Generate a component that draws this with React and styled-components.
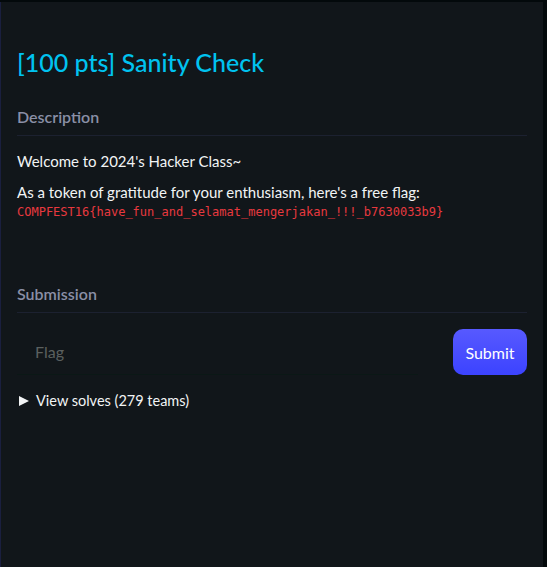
import styled, { createGlobalStyle } from "styled-components";

const Global = createGlobalStyle`
  body {
    margin: 0;
    background: #03090b;
    font-family: "Lato", "Noto Sans", sans-serif;
  }
`;

export default function App() {
  return (
    <>
      <Global />
      <Panel>
        <Title>[100 pts] Sanity Check</Title>
        <Section>
          <Heading>Description</Heading>
          <Text>Welcome to 2024's Hacker Class~</Text>
          <Text>
            As a token of gratitude for your enthusiasm, here's a free flag:
            <Flag>COMPFEST16{"{"}have_fun_and_selamat_mengerjakan_!!!_b7630033b9{"}"}</Flag>
          </Text>
        </Section>
        <Section top="60px">
          <Heading>Submission</Heading>
          <Form onSubmit={(e) => e.preventDefault()}>
            <FlagInput placeholder="Flag" />
            <SubmitButton type="submit">Submit</SubmitButton>
          </Form>
          <Solves>
            <summary>View solves (279 teams)</summary>
          </Solves>
        </Section>
      </Panel>
    </>
  );
}

const Panel = styled.div`
  margin-top: 2px;
  width: 543px;
  min-height: 565px;
  box-sizing: border-box;
  padding: 44px 16px 0 16px;
  background: #11161a;
  border-left: 1px solid #1a1f3f;
  color: #f2f4f5;
`;

const Title = styled.h1`
  margin: 0;
  font-size: 25px;
  line-height: 32px;
  font-weight: 500;
  color: #00c3f0;
`;

const Section = styled.div`
  margin-top: ${(p) => p.top || "27px"};
`;

const Heading = styled.h2`
  margin: 0 0 15px;
  padding-bottom: 6px;
  font-size: 16px;
  line-height: 24px;
  font-weight: 600;
  color: #8a8fa6;
  border-bottom: 1px solid #1c2130;
`;

const Text = styled.p`
  margin: 0 0 11px;
  font-size: 15px;
  line-height: 20px;
`;

const Flag = styled.code`
  display: block;
  font-family: "DejaVu Sans Mono", monospace;
  font-size: 12px;
  line-height: 20px;
  color: #e8393f;
`;

const Form = styled.form`
  display: flex;
  align-items: stretch;
  gap: 35px;
  margin-top: 16px;
`;

const FlagInput = styled.input`
  flex: 1;
  height: 46px;
  box-sizing: border-box;
  padding: 0 18px;
  background: transparent;
  border: none;
  border-bottom: 1px solid #0b1816;
  color: #f2f4f5;
  font-family: inherit;
  font-size: 16px;
  outline: none;
  &::placeholder {
    color: #5b605f;
  }
`;

const SubmitButton = styled.button`
  width: 74px;
  height: 46px;
  border: none;
  border-radius: 10px;
  background: linear-gradient(180deg, #5759ff 0%, #3c43ff 100%);
  color: #fff;
  font-family: inherit;
  font-size: 16px;
  font-weight: 400;
  cursor: pointer;
`;

const Solves = styled.details`
  margin-top: 16px;
  font-size: 14.5px;
  line-height: 20px;
  summary {
    display: flex;
    align-items: center;
    cursor: pointer;
    list-style: none;
    padding-left: 2px;
  }
  summary::-webkit-details-marker {
    display: none;
  }
  summary::before {
    content: "";
    width: 0;
    height: 0;
    margin-right: 7px;
    border-top: 5.5px solid transparent;
    border-bottom: 5.5px solid transparent;
    border-left: 10px solid #f2f4f5;
  }
`;
